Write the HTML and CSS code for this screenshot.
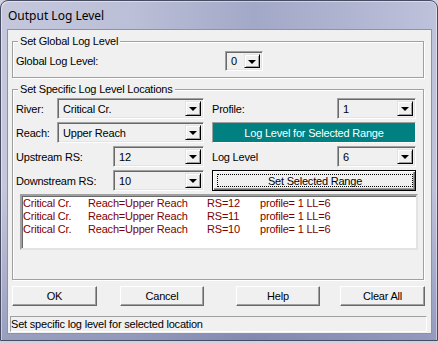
FILE: index.html
```html
<!DOCTYPE html>
<html lang="en">
<head>
    <meta charset="UTF-8">
    <title>Output Log Level</title>
    <link rel="stylesheet" href="styles.css">
</head>
<body>
    <div class="window">
        <div class="titlebar">Output Log Level</div>
        <div class="client">
            <div class="group group-global">
                <span class="group-title">Set Global Log Level</span>
                <div class="row">
                    <span class="label global-label">Global Log Level:</span>
                    <div class="combo combo-tiny"><span class="value">0</span><span class="drop"></span></div>
                </div>
            </div>

            <div class="group group-specific">
                <span class="group-title">Set Specific Log Level Locations</span>
                <div class="rows">
                    <div class="row">
                        <div class="cell-left">
                            <span class="label">River:</span>
                            <div class="combo combo-wide"><span class="value">Critical Cr.</span><span class="drop"></span></div>
                        </div>
                        <div class="cell-right">
                            <span class="label">Profile:</span>
                            <div class="combo combo-small"><span class="value">1</span><span class="drop"></span></div>
                        </div>
                    </div>
                    <div class="row">
                        <div class="cell-left">
                            <span class="label">Reach:</span>
                            <div class="combo combo-wide"><span class="value">Upper Reach</span><span class="drop"></span></div>
                        </div>
                        <div class="cell-right">
                            <div class="banner">Log Level for Selected Range</div>
                        </div>
                    </div>
                    <div class="row">
                        <div class="cell-left">
                            <span class="label">Upstream RS:</span>
                            <div class="combo combo-mid"><span class="value">12</span><span class="drop"></span></div>
                        </div>
                        <div class="cell-right">
                            <span class="label">Log Level</span>
                            <div class="combo combo-small"><span class="value">6</span><span class="drop"></span></div>
                        </div>
                    </div>
                    <div class="row">
                        <div class="cell-left">
                            <span class="label">Downstream RS:</span>
                            <div class="combo combo-mid"><span class="value">10</span><span class="drop"></span></div>
                        </div>
                        <div class="cell-right">
                            <button class="btn btn-default"><span class="focus">Set Selected Range</span></button>
                        </div>
                    </div>
                </div>

                <div class="listbox">
                    <div class="list-line"><span>Critical Cr.</span><span>Reach=Upper Reach</span><span>RS=12</span><span>profile= 1 LL=6</span></div>
                    <div class="list-line"><span>Critical Cr.</span><span>Reach=Upper Reach</span><span>RS=11</span><span>profile= 1 LL=6</span></div>
                    <div class="list-line"><span>Critical Cr.</span><span>Reach=Upper Reach</span><span>RS=10</span><span>profile= 1 LL=6</span></div>
                </div>
            </div>

            <div class="buttons">
                <button class="btn btn-ok">OK</button>
                <button class="btn btn-cancel">Cancel</button>
                <button class="btn btn-help">Help</button>
                <button class="btn btn-clear">Clear All</button>
            </div>

            <div class="statusbar">Set specific log level for selected location</div>
        </div>
    </div>
</body>
</html>
```

FILE: styles.css
```css
* {
    box-sizing: border-box;
}
body {
    margin: 0;
    background: #cfd1de;
    font-family: "Liberation Sans", Arial, sans-serif;
    font-size: 11px;
    letter-spacing: -0.2px;
    color: #000;
}
.window {
    width: 438px;
    height: 341px;
    border: 1px solid #474c63;
    border-radius: 8px 8px 0 0;
    padding: 0 5px 6px 6px;
    display: flex;
    flex-direction: column;
    background:
        linear-gradient(180deg, rgba(255, 255, 255, 0) 55%, rgba(70, 80, 135, 0.35) 100%),
        linear-gradient(90deg, #c5c8dc 0%, #bbbfd7 30%, #a2a8c7 58%, #aeb3d0 78%, #bec2db 100%);
    box-shadow: inset 1px 1px rgba(255, 255, 255, 0.45), inset -1px 0 rgba(255, 255, 255, 0.45);
}
.titlebar {
    height: 28px;
    display: flex;
    align-items: center;
    padding-left: 1px;
    font-family: "Noto Sans", "Open Sans", sans-serif;
    font-size: 12px;
    letter-spacing: 0;
}
.client {
    flex: 1;
    background: #f0f0f0;
    border: 1px solid #8d92a8;
}

/* group boxes */
.group {
    position: relative;
    border: 1px solid #a0a0a0;
    box-shadow: inset 1px 1px #fff, 1px 1px #fff;
    margin-left: 4px;
    width: 412px;
}
.group-title {
    position: absolute;
    top: -7px;
    left: 5px;
    padding: 0 2px;
    line-height: 13px;
    background: #f0f0f0;
}
.group-global {
    margin-top: 11px;
    height: 37px;
    padding: 9px 3px 0 3px;
}
.group-specific {
    margin-top: 11px;
    height: 191px;
    padding: 8px 3px 0 3px;
}
.rows {
    display: flex;
    flex-direction: column;
    gap: 3px;
}
.row {
    display: flex;
    align-items: center;
    height: 21px;
}
.group-global .row {
    height: 20px;
}
.global-label {
    width: 209px;
}
.cell-left {
    width: 188px;
    display: flex;
    align-items: center;
    height: 100%;
}
.cell-right {
    width: 204px;
    margin-left: 8px;
    display: flex;
    align-items: center;
    height: 100%;
}
.label {
    flex: 1;
    white-space: nowrap;
}
.global-label {
    flex: none;
}

/* combo boxes */
.combo {
    height: 100%;
    display: flex;
    align-items: center;
    border: 1px solid;
    border-color: #a0a0a0 #fff #fff #a0a0a0;
    box-shadow: inset 1px 1px #696969, inset -1px -1px #e3e3e3;
    background: #f0f0f0;
    padding: 2px;
}
.combo .value {
    flex: 1;
    padding-left: 3px;
}
.combo-tiny {
    width: 38px;
}
.combo-wide {
    width: 147px;
}
.combo-mid {
    width: 91px;
}
.combo-small {
    width: 79px;
}
.drop {
    width: 16px;
    height: 100%;
    border: 1px solid;
    border-color: #e3e3e3 #000 #000 #e3e3e3;
    box-shadow: inset 1px 1px #fff, inset -1px -1px #a0a0a0;
    background: #f0f0f0;
    display: flex;
    align-items: center;
    justify-content: center;
}
.drop::after {
    content: "";
    border-left: 4px solid transparent;
    border-right: 4px solid transparent;
    border-top: 4px solid #000;
    margin-top: 1px;
}

.banner {
    width: 100%;
    height: 100%;
    background: #008080;
    color: #fff;
    border: 1px solid;
    border-color: #a0a0a0 #fff #fff #a0a0a0;
    display: flex;
    align-items: center;
    justify-content: center;
}

/* buttons */
.btn {
    font-family: inherit;
    font-size: 11px;
    letter-spacing: -0.2px;
    color: #000;
    background: #f0f0f0;
    border: 1px solid;
    border-color: #fff #696969 #696969 #fff;
    box-shadow: inset -1px -1px #a0a0a0;
    padding: 0;
    height: 20px;
}
.btn-default {
    width: 100%;
    height: 100%;
    border: 1px solid #000;
    box-shadow: inset 1px 1px #fff, inset -1px -1px #696969, inset -2px -2px #a0a0a0;
    padding: 3px 2px 3px 4px;
}
.btn-default .focus {
    display: flex;
    align-items: center;
    justify-content: center;
    height: 100%;
    border: 1px dotted #000;
}

/* list */
.listbox {
    margin: 3px 0 0 4px;
    width: 398px;
    height: 56px;
    background: #fff;
    border: 2px solid;
    border-color: #a0a0a0 #e3e3e3 #e3e3e3 #a0a0a0;
    box-shadow: inset 1px 1px #696969;
    padding: 1px 0 0 1px;
    color: #800000;
}
.list-line {
    display: grid;
    grid-template-columns: 65px 119px 53px auto;
    line-height: 13px;
    white-space: pre;
}

.buttons {
    display: flex;
    margin-top: 6px;
}
.btn-ok {
    margin-left: 4px;
    width: 85px;
}
.btn-cancel {
    margin-left: 23px;
    width: 84px;
}
.btn-help {
    margin-left: 32px;
    width: 84px;
}
.btn-clear {
    margin-left: 20px;
    width: 85px;
}

.statusbar {
    margin: 10px 0 0 2px;
    width: 417px;
    height: 16px;
    border: 1px solid;
    border-color: #a0a0a0 #fff #fff #a0a0a0;
    line-height: 14px;
    padding-left: 0;
    white-space: nowrap;
}
```
